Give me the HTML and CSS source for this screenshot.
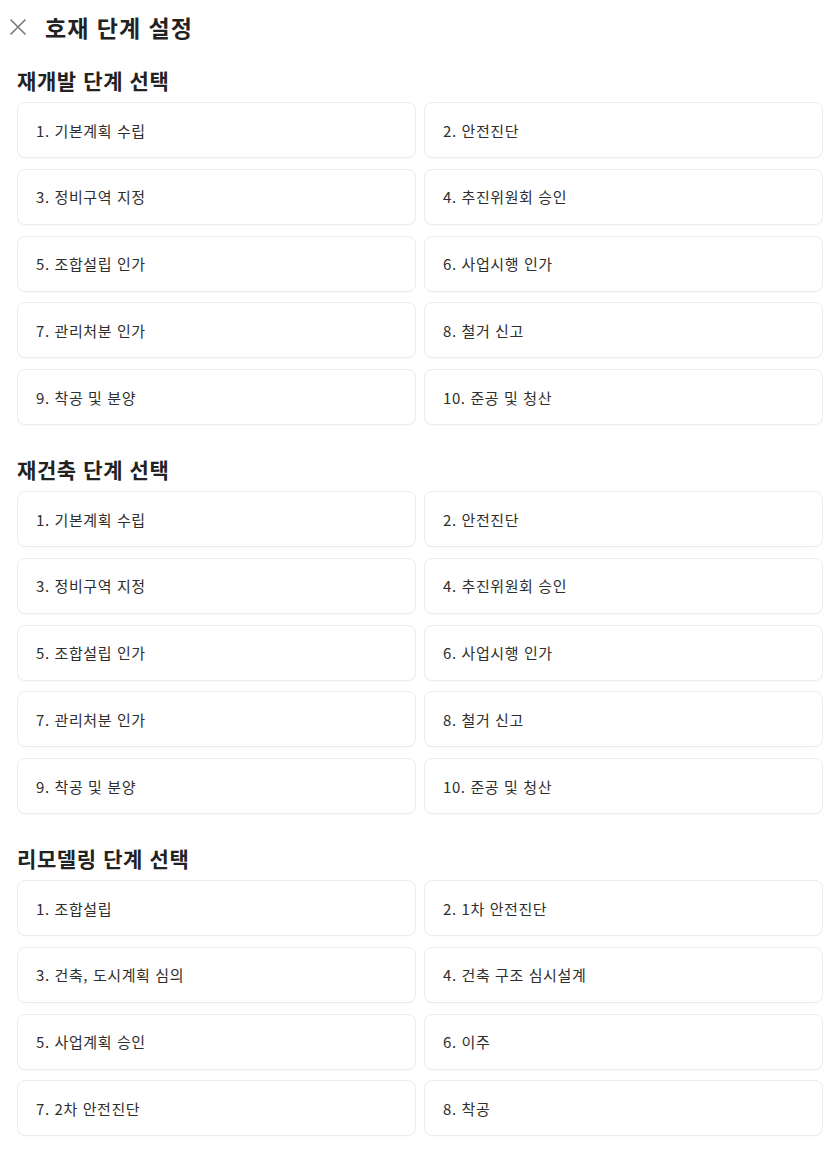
FILE: index.html
```html
<!DOCTYPE html>
<html lang="ko">
<head>
<meta charset="utf-8">
<link rel="stylesheet" href="styles.css">
</head>
<body>
<div class="page">
  <header class="header">
    <svg class="close" width="18" height="18" viewBox="0 0 18 18"><path d="M1.5 1.5L16.5 16.5M16.5 1.5L1.5 16.5" stroke="#7a7a7a" stroke-width="1.6" fill="none"/></svg>
    <h1 class="title">호재 단계 설정</h1>
  </header>

  <section class="section">
    <h2 class="section-title">재개발 단계 선택</h2>
    <div class="grid">
      <button class="opt">1. 기본계획 수립</button>
      <button class="opt">2. 안전진단</button>
      <button class="opt">3. 정비구역 지정</button>
      <button class="opt">4. 추진위원회 승인</button>
      <button class="opt">5. 조합설립 인가</button>
      <button class="opt">6. 사업시행 인가</button>
      <button class="opt">7. 관리처분 인가</button>
      <button class="opt">8. 철거 신고</button>
      <button class="opt">9. 착공 및 분양</button>
      <button class="opt">10. 준공 및 청산</button>
    </div>
  </section>

  <section class="section">
    <h2 class="section-title">재건축 단계 선택</h2>
    <div class="grid">
      <button class="opt">1. 기본계획 수립</button>
      <button class="opt">2. 안전진단</button>
      <button class="opt">3. 정비구역 지정</button>
      <button class="opt">4. 추진위원회 승인</button>
      <button class="opt">5. 조합설립 인가</button>
      <button class="opt">6. 사업시행 인가</button>
      <button class="opt">7. 관리처분 인가</button>
      <button class="opt">8. 철거 신고</button>
      <button class="opt">9. 착공 및 분양</button>
      <button class="opt">10. 준공 및 청산</button>
    </div>
  </section>

  <section class="section">
    <h2 class="section-title">리모델링 단계 선택</h2>
    <div class="grid">
      <button class="opt">1. 조합설립</button>
      <button class="opt">2. 1차 안전진단</button>
      <button class="opt">3. 건축, 도시계획 심의</button>
      <button class="opt">4. 건축 구조 심시설계</button>
      <button class="opt">5. 사업계획 승인</button>
      <button class="opt">6. 이주</button>
      <button class="opt">7. 2차 안전진단</button>
      <button class="opt">8. 착공</button>
    </div>
  </section>
</div>
</body>
</html>
```

FILE: styles.css
```css
* { box-sizing: border-box; }
html, body { margin: 0; padding: 0; background: #fff; }
body {
  font-family: "Noto Sans CJK KR", "Noto Sans", sans-serif;
  color: #222;
}
.page {
  padding: 0 4px 0 17px;
}
.header {
  display: flex;
  align-items: center;
  height: 54px;
  margin-left: -8px;
  gap: 18px;
}
.close { flex: none; }
.title {
  margin: 0;
  font-size: 23px;
  font-weight: 700;
  color: #222;
  letter-spacing: 1px;
}
.section { margin-bottom: 18px; }
.section-title {
  margin: 0;
  height: 48px;
  display: flex;
  align-items: center;
  padding-top: 4px;
  font-size: 21px;
  font-weight: 700;
  color: #222;
  letter-spacing: 0.6px;
}
.grid {
  display: grid;
  grid-template-columns: 1fr 1fr;
  column-gap: 8px;
  row-gap: 10.75px;
}
.opt {
  height: 56px;
  border: 1px solid #ececec;
  border-radius: 8px;
  background: #fff;
  text-align: left;
  padding: 0 0 0 18px;
  font-family: "Noto Sans CJK KR", "Noto Sans", sans-serif;
  font-size: 15px;
  letter-spacing: 0.6px;
  color: #2e2e2e;
  box-shadow: 0 1px 1px rgba(0,0,0,0.02);
}
```
